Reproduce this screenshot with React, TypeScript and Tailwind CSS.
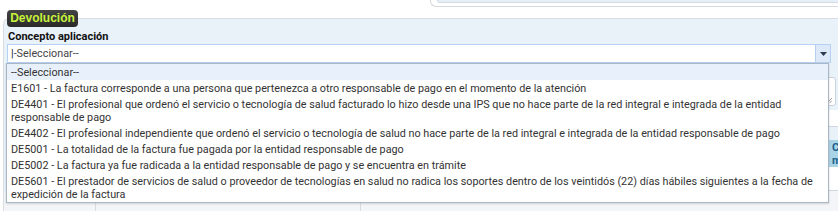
import React from "react";

const items: string[] = [
  "E1601 - La factura corresponde a una persona que pertenezca a otro responsable de pago en el momento de la atención",
  "DE4401 - El profesional que ordenó el servicio o tecnología de salud facturado lo hizo desde una IPS que no hace parte de la red integral e integrada de la entidad responsable de pago",
  "DE4402 - El profesional independiente que ordenó el servicio o tecnología de salud no hace parte de la red integral e integrada de la entidad responsable de pago",
  "DE5001 - La totalidad de la factura fue pagada por la entidad responsable de pago",
  "DE5002 - La factura ya fue radicada a la entidad responsable de pago y se encuentra en trámite",
  "DE5601 - El prestador de servicios de salud o proveedor de tecnologías en salud no radica los soportes dentro de los veintidós (22) días hábiles siguientes a la fecha de expedición de la factura",
];

export default function App() {
  return (
    <div className="relative w-[838px] h-[211px] overflow-hidden bg-white text-[#333] font-['Roboto','Liberation_Sans',sans-serif]">
      {/* top strip with end of previous panel */}
      <div className="h-[18px] flex">
        <div className="ml-[430px] flex-1 h-[7px] border-b border-l border-[#d6d9dd] rounded-bl-[6px] bg-white pl-[6px] pb-[3px]">
          <div className="h-full bg-[#e6eef6] border-b border-l border-[#d3dce6] rounded-bl-[3px]" />
        </div>
      </div>

      {/* panel */}
      <div className="ml-[3px] h-[193px] border-t border-l border-[#d9dde1] rounded-tl-[6px] bg-[#e9f1f9]">
        <div className="ml-[3px] -mt-[9px] w-[71px] h-[17px] rounded-[4px] bg-gradient-to-b from-[#444] to-[#2a2a2a] text-[#c8f23a] text-[12px] font-bold leading-[17px] text-center font-['Liberation_Sans',sans-serif]">
          Devolución
        </div>
        <div className="ml-[4px] mt-[3px] text-[11px] font-bold text-[#111] leading-[13px]">
          Concepto aplicación
        </div>
        {/* select */}
        <div className="ml-[3px] mt-[1px] w-[824px] h-[19px] flex bg-white border border-[#b4d0f2]">
          <div className="flex-1 pl-[3px] text-[10.8px] leading-[17px] text-[#444]">
            <span className="text-[#222]">|</span>-Seleccionar--
          </div>
          <div className="w-[15px] h-full bg-[#dde9f8] border-l border-[#b4d0f2] flex items-center justify-center">
            <svg width="7" height="4" viewBox="0 0 7 4"><path d="M0 0h7L3.5 4z" fill="#2a3a4f" /></svg>
          </div>
        </div>

        {/* underlying content (partially hidden) */}
        <div className="flex justify-end mt-[14px]">
          <div className="w-[40px] h-[29px] bg-white border border-[#c9d3de] rounded-[3px] relative mr-[2px]">
            <svg className="absolute right-[3px] bottom-[2px]" width="5" height="5" viewBox="0 0 5 5"><path d="M0 5L5 0M2.5 5L5 2.5" stroke="#888" strokeWidth="0.8" /></svg>
          </div>
        </div>
        <div className="mt-[4px] h-[17px] bg-white border-b border-[#d0d6dd] ml-[790px]" />
        <div className="mt-[13px] ml-[780px] h-[27px] bg-[#a9d3e6] text-[#1b5f8c] text-[11px] font-bold leading-[13px] pl-[48px] pt-[1px]">
          C<br />m
        </div>
        <div className="h-[24px] bg-white border-b border-[#d0d6dd] ml-[780px]" />
        <div className="h-[20px] bg-[#f3f5f8] flex text-[11px] text-[#666] leading-[14px]">
          <div className="w-[92px] border-r border-[#d8dde3]" />
          <div className="w-[265px] border-r border-[#d8dde3] pl-[6px] pt-[2px]">900300</div>
          <div className="flex-1 pl-[6px] pt-[2px]">PROVEEDOR DE TECNOLOGÍAS EN SALUD</div>
        </div>
      </div>

      {/* open dropdown list */}
      <div className="absolute left-[6px] top-[63px] w-[823px] bg-white border border-[#a9b6c4] shadow-[0_1px_2px_rgba(0,0,0,0.15)] text-[10.8px] text-[#333]">
        <div className="bg-[#e8f0fb] px-[4px] py-[1.5px] leading-[13px]">--Seleccionar--</div>
        {items.map((t) => (
          <div key={t} className="px-[4px] py-[1.5px] leading-[13px]">
            {t}
          </div>
        ))}
      </div>
    </div>
  );
}
